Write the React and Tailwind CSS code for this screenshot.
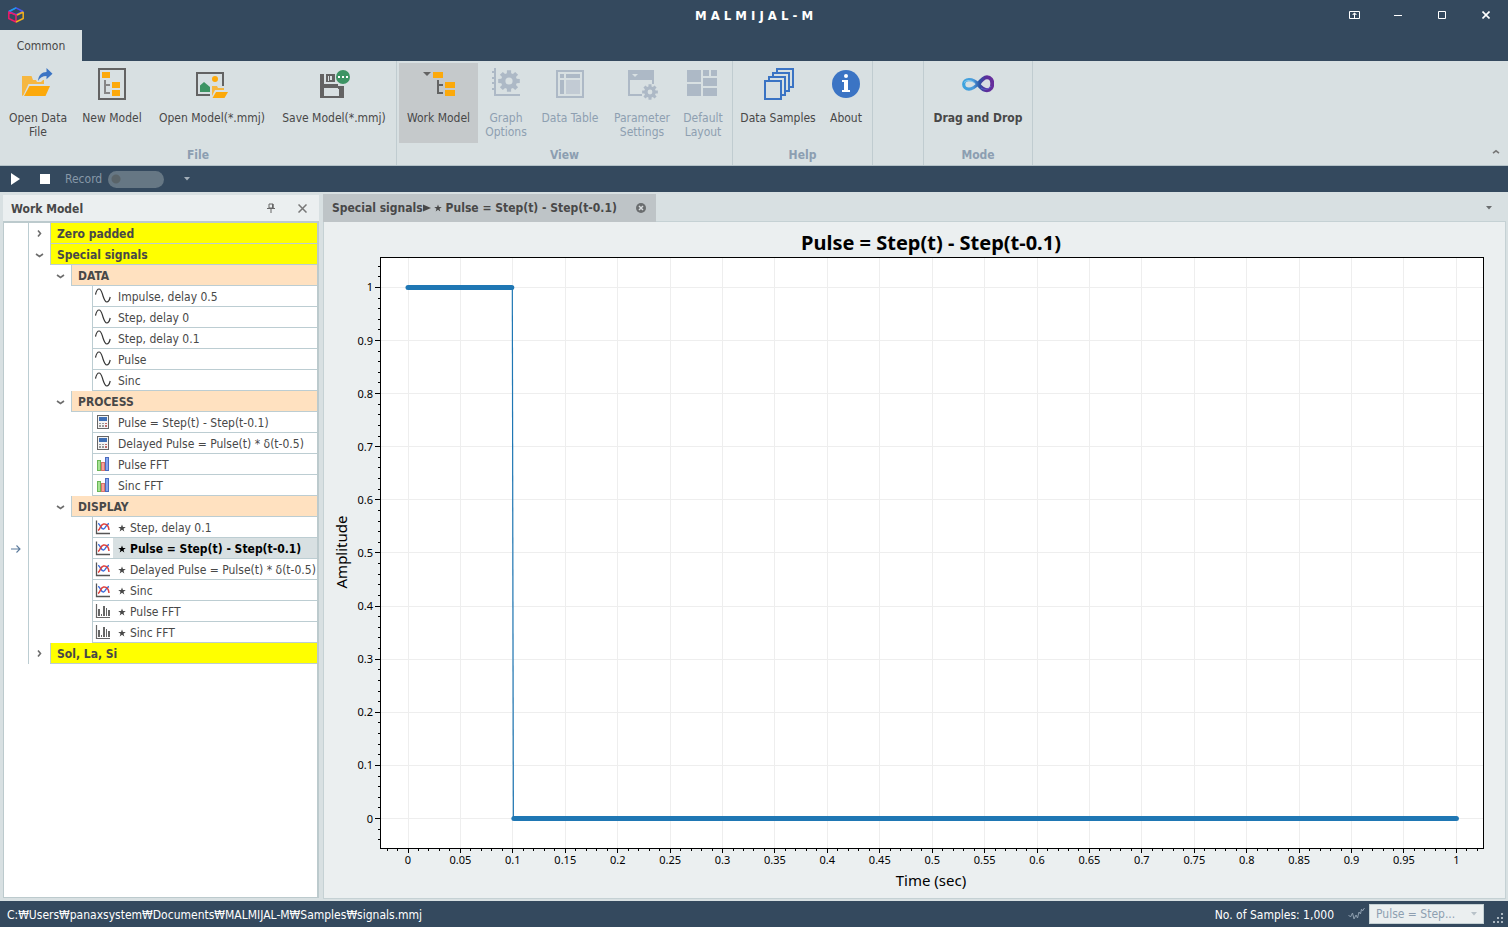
import React from "react";

const UI = "font-['DejaVu_Sans_Condensed','Noto_Sans_CJK_KR',sans-serif]";

/* ---------- ribbon icons ---------- */

function Icon({ children }) {
  return (
    <svg width="32" height="32" viewBox="0 0 32 32" aria-hidden="true" className="shrink-0">
      {children}
    </svg>
  );
}

function gearPath(cx, cy, outer, inner, hole) {
  const teeth = 8;
  let d = "";
  for (let i = 0; i < teeth; i++) {
    const a = (i / teeth) * Math.PI * 2;
    [[-0.27, inner], [-0.19, outer], [0.19, outer], [0.27, inner]].forEach(([o, r], k) => {
      d += `${i === 0 && k === 0 ? "M" : "L"}${(cx + r * Math.cos(a + o)).toFixed(2)} ${(cy + r * Math.sin(a + o)).toFixed(2)}`;
    });
  }
  return `${d}Z M${cx + hole} ${cy}A${hole} ${hole} 0 1 0 ${cx - hole} ${cy}A${hole} ${hole} 0 1 0 ${cx + hole} ${cy}Z`;
}

const OpenDataIcon = () => (
  <Icon>
    <path d="M0 8h9.500l1.500 4h3l1 2h4l2-2h1v4H6.500L1.500 27 0 28z" fill="#f6b740" />
    <path d="M7.500 18H28l-4.500 10H2z" fill="#fca90b" />
    <path d="M16 13c.5-6 4-9 8.500-9V0l6 5.700-6 5.600V8c-4 0-6.500 1.500-8.500 5z" fill="#3b74c4" />
  </Icon>
);

const NewModelIcon = () => (
  <Icon>
    <rect x="3" y="1" width="26" height="30" fill="none" stroke="#636363" strokeWidth="2" />
    <path d="M6 4h8v6H6zM16 14h8v6h-8zM16 22h8v6h-8z" fill="#fca90b" />
    <path d="M9 12v13h5M9 17h5" fill="none" stroke="#868686" strokeWidth="2" />
  </Icon>
);

const OpenModelIcon = () => (
  <Icon>
    <path d="M14 27H1V5h26v13" fill="none" stroke="#636363" strokeWidth="2" />
    <path d="M8 14l6 5v5H4v-6.500z" fill="#3d9464" />
    <circle cx="19" cy="11" r="3" fill="#fca90b" />
    <path d="M16 18h5l1 2h6v2h-9l-3 6z" fill="#f6b740" />
    <path d="M20 24h12l-3.500 6H16.500z" fill="#fca90b" />
  </Icon>
);

const SaveModelIcon = () => (
  <Icon>
    <path d="M2 6h4v10h14v2h6v12H2z" fill="#636363" />
    <path d="M8 6h9v8H8z" fill="#636363" />
    <path d="M10 8h1v5h-1zM12 8h2v4h-2z" fill="#d8e0e2" />
    <path d="M6 20h15v8H6z" fill="#d8e0e2" />
    <path d="M20 18h6v3h-6z" fill="#636363" />
    <circle cx="25" cy="9" r="7" fill="#3d9464" />
    <path d="M20 8h2v2h-2zM24 8h2v2h-2zM28 8h2v2h-2z" fill="#fff" />
  </Icon>
);

const WorkModelIcon = () => (
  <Icon>
    <path d="M0 4h8L4 8z" fill="#636363" />
    <path d="M10 4h10v6H10zM22 14h10v6H22zM22 22h10v6H22z" fill="#fca90b" />
    <path d="M15 12v13h5M15 17h5" fill="none" stroke="#636363" strokeWidth="2" />
  </Icon>
);

const GraphOptionsIcon = () => (
  <Icon>
    <path d="M5 0v27h25" fill="none" stroke="#adb9c6" strokeWidth="2" />
    <path d="M2 4h3M2 10h3M2 15h3M2 21h3" stroke="#adb9c6" strokeWidth="2" />
    <path d={gearPath(19, 13, 11, 8, 3.6)} fill="#adb9c6" fillRule="evenodd" />
  </Icon>
);

const DataTableIcon = () => (
  <Icon>
    <rect x="3" y="3" width="26" height="26" fill="none" stroke="#adb9c6" strokeWidth="2" />
    <path d="M6 6h4v4H6zM12 6h14v4H12zM6 12h4v14H6z" fill="#adb9c6" />
    <path d="M12 12h14v14H12z" fill="#c2cbd4" />
  </Icon>
);

const ParameterIcon = () => (
  <Icon>
    <path d="M2 2h26v14h-2v-4H4v14h12v2H2z" fill="#adb9c6" />
    <path d="M6 6h6l-3 3z" fill="#d8e0e2" />
    <path d={gearPath(24, 24, 8, 5.8, 2.4)} fill="#adb9c6" fillRule="evenodd" />
  </Icon>
);

const LayoutIcon = () => (
  <Icon>
    <path
      d="M0 2h14v12H0zM0 16h14v12H0zM16 2h6v6h-6zM24 2h6v6h-6zM16 10h14v8H16zM16 20h14v8H16z"
      fill="#adb9c6"
    />
  </Icon>
);

const SamplesIcon = () => (
  <Icon>
    <g fill="#d8e0e2" stroke="#3b74c4" strokeWidth="2">
      <path d="M15 1h16v18H15z" />
      <path d="M11 5h16v18H11z" />
      <path d="M7 9h16v18H7z" />
      <path d="M3 13h16v18H3z" />
    </g>
  </Icon>
);

const AboutIcon = () => (
  <Icon>
    <circle cx="16" cy="16" r="14" fill="#3b74c4" />
    <circle cx="16" cy="8" r="2" fill="#fff" />
    <path d="M12 12h6v10h2v2h-8v-2h2v-8h-2z" fill="#fff" />
  </Icon>
);

const DragDropIcon = () => (
  <Icon>
    <defs>
      <linearGradient id="loop" gradientUnits="userSpaceOnUse" x1="0" x2="32" y1="16" y2="16">
        <stop offset="0" stopColor="#3ba4de" />
        <stop offset="0.35" stopColor="#4a9bdb" />
        <stop offset="0.55" stopColor="#2f55a4" />
        <stop offset="0.75" stopColor="#5b2d9b" />
        <stop offset="1" stopColor="#6a2f9c" />
      </linearGradient>
    </defs>
    <g fill="none" stroke="url(#loop)">
      <path d="M17 17C13.500 13 10.500 11.700 7 11.700c-3.300 0-5.300 2-5.300 4.600S3.700 21.200 7 21.200c4 0 7-3 10-6.200" strokeWidth="3.200" />
      <path d="M15 18c3-4 5.500-8.800 10-8.800 3.500 0 5.300 3 5.300 6.300 0 4-2 6.700-5.300 6.700-3.500 0-6-2.200-9-6.200" strokeWidth="4" />
    </g>
    <path d="M2 14.500c3-3 7.500-2.500 11 1" fill="none" stroke="#a5dcf5" opacity="0.7" />
    <path d="M19 20c3 2 8 2 10-2" fill="none" stroke="#5f7be0" opacity="0.7" />
  </Icon>
);

/* ---------- tree icons ---------- */

const WaveIcon = () => (
  <svg width="16" height="16" viewBox="0 0 16 16" aria-hidden="true">
    <path d="M.5 6.500C1.500 2 3 1 4 1c2.500 0 3 4 4 7s2 6 3.800 6c1.400 0 2.700-2 3.400-5" fill="none" stroke="#333" strokeWidth="1.200" />
  </svg>
);

const CalcIcon = () => (
  <svg width="16" height="16" viewBox="0 0 16 16" aria-hidden="true">
    <rect x="2.500" y="1.500" width="11" height="13" fill="#f4f4f4" stroke="#666" />
    <rect x="4" y="3" width="8" height="4" fill="#3f6fb5" />
    <path d="M4 9h2v1H4zM7 9h2v1H7zM4 11h2v2H4zM7 11h2v2H7z" fill="#9a9a9a" />
    <path d="M10 9h2v1h-2zM10 11h2v2h-2z" fill="#c06a68" />
  </svg>
);

const BarsIcon = () => (
  <svg width="16" height="16" viewBox="0 0 16 16" aria-hidden="true">
    <rect x="2.500" y="4.500" width="3" height="10" fill="#a6e394" stroke="#69b557" />
    <rect x="6.500" y="6.500" width="3" height="8" fill="#f4a39a" stroke="#d8726b" />
    <rect x="10.500" y="1.500" width="3" height="13" fill="#86a6f0" stroke="#4a6bbd" />
  </svg>
);

const PlotIcon = () => (
  <svg width="16" height="16" viewBox="0 0 16 16" aria-hidden="true">
    <path d="M1.500 1.500v13H15" fill="none" stroke="#555" strokeWidth="1.300" />
    <path d="M3 4.500c2.500 0 2.500 6 5.500 5.500 2.500-.5 2-4.500 5.500-5.500" fill="none" stroke="#3f6fdc" strokeWidth="1.400" />
    <path d="M3 11.500c2.500-1 2-5.500 5.500-6.500 3.500-.5 5 2 5.500 6" fill="none" stroke="#e0423c" strokeWidth="1.500" />
  </svg>
);

const SpectrumIcon = () => (
  <svg width="16" height="16" viewBox="0 0 16 16" aria-hidden="true">
    <path d="M1.500 1v13.500H15" fill="none" stroke="#666" strokeWidth="1.200" />
    <path d="M3 6h2v7H3zM6 11h1v2H6zM8 3h2v10H8zM11 5h1v8h-1zM13 7h2v6h-2z" fill="#666" />
  </svg>
);

const TREE_ICONS = { wave: WaveIcon, calc: CalcIcon, bars: BarsIcon, plot: PlotIcon, spectrum: SpectrumIcon };

const Chevron = ({ open }) => (
  <svg width="9" height="9" viewBox="0 0 9 9" aria-hidden="true">
    <path
      d={open ? "M1 4l3.500 2.500L8 4" : "M3 1.500l2.500 3L3 7.500"}
      fill="none"
      stroke="#6d6d6d"
      strokeWidth="1.600"
    />
  </svg>
);

const DownTriangle = ({ color }) => (
  <svg width="6" height="4" viewBox="0 0 6 4" aria-hidden="true">
    <path d="M0 0h6L3 3.500z" fill={color} />
  </svg>
);

/* ---------- title bar ---------- */

function TitleBar() {
  return (
    <header className="grid h-[30px] shrink-0 grid-cols-[1fr_auto_1fr] items-center text-white">
      <svg width="16" height="16" viewBox="0 0 16 16" aria-hidden="true" className="ml-2">
        <g fill="none" strokeWidth="1.500" strokeLinejoin="round">
          <path d="M1 4.500L8 .8l7 3.700-7 3.300z" stroke="#4a55f0" />
          <path d="M1 4.500L8 .8" stroke="#1ba0ec" />
          <path d="M.8 5v6.500L8 15V8z" stroke="#ee1a6a" />
          <path d="M15.200 5v6.500L8 15M9 8l6.200-3" stroke="#f3b01c" />
        </g>
      </svg>
      <h1 className="pt-[2px] text-[13px] font-bold">M A L M I J A L - M</h1>
      <div className="flex justify-end">
        <button aria-label="Pin to top" className="flex h-[30px] w-11 items-center justify-center">
          <svg width="11" height="8" viewBox="0 0 11 8"><path d="M.5.5h10v7H.5zM5.500 2v5" fill="none" stroke="#fff" /><path d="M5.500 1.500l2.500 2.300H3z" fill="#fff" /></svg>
        </button>
        <button aria-label="Minimize" className="flex h-[30px] w-11 items-center justify-center">
          <svg width="8" height="8" viewBox="0 0 8 8"><path d="M0 4.500h8" stroke="#fff" /></svg>
        </button>
        <button aria-label="Maximize" className="flex h-[30px] w-11 items-center justify-center">
          <svg width="8" height="8" viewBox="0 0 8 8"><path d="M.5.5h7v7h-7z" fill="none" stroke="#fff" /></svg>
        </button>
        <button aria-label="Close" className="flex h-[30px] w-11 items-center justify-center">
          <svg width="8" height="8" viewBox="0 0 8 8"><path d="M.5.5l7 7M7.500.5l-7 7" stroke="#fff" strokeWidth="1.600" /></svg>
        </button>
      </div>
    </header>
  );
}

/* ---------- ribbon ---------- */

function RibbonButton({ icon, label, width, active, disabled, bold }) {
  return (
    <button
      disabled={disabled}
      className={`flex h-20 shrink-0 flex-col items-center gap-[11px] pt-[5px] leading-[14px] ${width} ${active ? "bg-[#c5c9cb]" : ""} ${disabled ? "text-[#8e9fb1]" : "text-[#484848]"} ${bold ? "font-bold" : ""}`}
    >
      {icon}
      <span className="whitespace-pre text-center">{label}</span>
    </button>
  );
}

function RibbonGroup({ title, children, width }) {
  return (
    <section className={`flex flex-col border-r border-[#c0ccd0] px-[2px] pt-[2px] ${width || ""}`}>
      <div className="flex h-20">{children}</div>
      {title && <h2 className="mt-[5px] text-center leading-[14px] font-bold text-[#8c9eb1]">{title}</h2>}
    </section>
  );
}

function Ribbon() {
  return (
    <div className="flex h-[105px] shrink-0 border-b border-[#b4c2c8] bg-[#d8e0e2]">
      <RibbonGroup title="File">
        <RibbonButton width="w-[72px]" icon={<OpenDataIcon />} label={"Open Data\nFile"} />
        <RibbonButton width="w-[76px]" icon={<NewModelIcon />} label="New Model" />
        <RibbonButton width="w-[124px]" icon={<OpenModelIcon />} label="Open Model(*.mmj)" />
        <RibbonButton width="w-[120px]" icon={<SaveModelIcon />} label="Save Model(*.mmj)" />
      </RibbonGroup>
      <RibbonGroup title="View" width="w-[336px]">
        <RibbonButton width="w-[79px]" icon={<WorkModelIcon />} label="Work Model" active />
        <RibbonButton width="w-[56px]" icon={<GraphOptionsIcon />} label={"Graph\nOptions"} disabled />
        <RibbonButton width="w-[72px]" icon={<DataTableIcon />} label="Data Table" disabled />
        <RibbonButton width="w-[72px]" icon={<ParameterIcon />} label={"Parameter\nSettings"} disabled />
        <RibbonButton width="w-[50px]" icon={<LayoutIcon />} label={"Default\nLayout"} disabled />
      </RibbonGroup>
      <RibbonGroup title="Help" width="w-[140px]">
        <RibbonButton width="w-[86px]" icon={<SamplesIcon />} label="Data Samples" />
        <RibbonButton width="w-[50px]" icon={<AboutIcon />} label="About" />
      </RibbonGroup>
      <RibbonGroup width="w-[51px]" />
      <RibbonGroup title="Mode" width="w-[109px]">
        <RibbonButton width="w-[104px]" icon={<DragDropIcon />} label="Drag and Drop" bold />
      </RibbonGroup>
      <button aria-label="Collapse ribbon" className="mt-auto mr-2 mb-[11px] ml-auto">
        <svg width="8" height="5" viewBox="0 0 8 5"><path d="M1 4.200L4 1.800l3 2.400" fill="none" stroke="#777" strokeWidth="1.600" /></svg>
      </button>
    </div>
  );
}

function RunBar() {
  return (
    <div className="flex h-[26px] shrink-0 items-center text-[#8798a8]">
      <button aria-label="Run" className="ml-[11px]">
        <svg width="9" height="12" viewBox="0 0 9 12"><path d="M0 0l9 6-9 6z" fill="#fff" /></svg>
      </button>
      <button aria-label="Stop" className="ml-5 size-[10px] bg-white" />
      <label htmlFor="record" className="ml-[15px] w-[43px]">Record</label>
      <input
        id="record"
        type="checkbox"
        role="switch"
        disabled
        className="h-[17px] w-14 appearance-none rounded-full bg-[#667784] bg-[radial-gradient(circle_at_8px_8px,#5a6469_4px,transparent_5px)]"
      />
      <button aria-label="More commands" className="ml-5">
        <DownTriangle color="#a3afb9" />
      </button>
    </div>
  );
}

/* ---------- work model panel ---------- */

const ROWS = [
  { level: 0, text: "Zero padded", open: false },
  { level: 0, text: "Special signals", open: true },
  { level: 1, text: "DATA", open: true },
  { level: 2, icon: "wave", text: "Impulse, delay 0.5" },
  { level: 2, icon: "wave", text: "Step, delay 0" },
  { level: 2, icon: "wave", text: "Step, delay 0.1" },
  { level: 2, icon: "wave", text: "Pulse" },
  { level: 2, icon: "wave", text: "Sinc" },
  { level: 1, text: "PROCESS", open: true },
  { level: 2, icon: "calc", text: "Pulse = Step(t) - Step(t-0.1)" },
  { level: 2, icon: "calc", text: "Delayed Pulse = Pulse(t) * δ(t-0.5)" },
  { level: 2, icon: "bars", text: "Pulse FFT" },
  { level: 2, icon: "bars", text: "Sinc FFT" },
  { level: 1, text: "DISPLAY", open: true },
  { level: 2, icon: "plot", star: true, text: "Step, delay 0.1" },
  { level: 2, icon: "plot", star: true, text: "Pulse = Step(t) - Step(t-0.1)", selected: true },
  { level: 2, icon: "plot", star: true, text: "Delayed Pulse = Pulse(t) * δ(t-0.5)" },
  { level: 2, icon: "plot", star: true, text: "Sinc" },
  { level: 2, icon: "spectrum", star: true, text: "Pulse FFT" },
  { level: 2, icon: "spectrum", star: true, text: "Sinc FFT" },
  { level: 0, text: "Sol, La, Si", open: false },
];

const Star = () => (
  <svg width="8" height="8" viewBox="0 0 10 10" aria-hidden="true" className="mr-1 shrink-0">
    <path d="M5 .5l1.200 3.200 3.500.1-2.800 2.100 1 3.400L5 7.300 2.100 9.300l1-3.400L.3 3.800l3.500-.1z" fill="currentColor" />
  </svg>
);

function TreeRow({ row }) {
  const TreeIcon = TREE_ICONS[row.icon];
  const indent = ["w-0", "w-[21px]", "w-[63px]"][row.level];
  const box = ["bg-[#ffff00] pl-1.5 font-bold", "bg-[#ffe1c0] pl-1.5 font-bold", ""][row.level];
  return (
    <li
      role="treeitem"
      aria-level={row.level + 1}
      aria-expanded={row.open}
      aria-selected={!!row.selected}
      className="flex h-[21px]"
    >
      <span className="flex w-[25px] shrink-0 items-center justify-center border-r border-[#bccdd2]">
        {row.selected && (
          <svg width="10" height="8" viewBox="0 0 10 8" aria-hidden="true">
            <path d="M0 4h9M5.500.5L9 4 5.500 7.500" fill="none" stroke="#5b7a9c" strokeWidth="1.100" />
          </svg>
        )}
      </span>
      <span className={`shrink-0 ${indent}`} />
      {row.level < 2 && (
        <button aria-label={`Toggle ${row.text}`} className="flex w-[21px] shrink-0 items-center justify-center">
          <Chevron open={row.open} />
        </button>
      )}
      <span className={`flex min-w-0 flex-1 items-center border-b border-l border-[#bccdd2] ${box}`}>
        {TreeIcon && (
          <span className="flex w-5 shrink-0 justify-center">
            <TreeIcon />
          </span>
        )}
        <span
          className={`flex h-full min-w-0 flex-1 items-center overflow-hidden pt-[2px] whitespace-nowrap ${row.level === 2 ? "pl-[5px]" : ""} ${row.selected ? "bg-[#d8e0e2] font-bold text-black" : ""}`}
        >
          {row.star && <Star />}
          {row.text}
        </span>
      </span>
    </li>
  );
}

function WorkModelPanel() {
  return (
    <aside className="flex w-[316px] shrink-0 flex-col pt-[1px] pb-[1px]">
      <div className="flex h-[26px] shrink-0 items-center bg-[#ebeff0] pr-2.5 pl-2">
        <h2 className="flex-1 pt-[2px] font-bold">Work Model</h2>
        <button aria-label="Auto hide" className="mr-[23px]">
          <svg width="8" height="10" viewBox="0 0 8 10"><path d="M2 1h4v4H2z" fill="none" stroke="#666" /><path d="M5 1h1.500v4H5z" fill="#666" /><path d="M0 5.500h8M4 6v4" stroke="#666" /></svg>
        </button>
        <button aria-label="Close panel" className="mr-0.5">
          <svg width="9" height="9" viewBox="0 0 9 9"><path d="M.5.5l8 8M8.500.5l-8 8" stroke="#777" strokeWidth="1.500" /></svg>
        </button>
      </div>
      <ul role="tree" className="min-h-0 flex-1 overflow-hidden border border-t-2 border-r-2 border-[#bccacd] bg-white">
        {ROWS.map((row, i) => (
          <TreeRow key={i} row={row} />
        ))}
      </ul>
    </aside>
  );
}

/* ---------- chart ---------- */

const PLOT = { left: 56, top: 35, right: 1159, bottom: 626 };
const px = (v) => 84 + v * 1048.4;
const py = (v) => 596.5 - v * 531.1;
const crisp = (v) => Math.floor(v) + 0.5;

function Chart() {
  const xs = Array.from({ length: 21 }, (_, i) => i / 20);
  const ys = Array.from({ length: 11 }, (_, i) => i / 10);
  const minorX = Array.from({ length: 105 }, (_, i) => (i - 2) / 100);
  const minorY = Array.from({ length: 55 }, (_, i) => (i - 2) / 50).filter((v) => v <= 1.045);
  return (
    <svg
      viewBox="0 0 1181 676"
      role="img"
      aria-label="Pulse = Step(t) - Step(t-0.1)"
      className="h-full w-full font-['Noto_Sans',sans-serif]"
    >
      <text x="607" y="28" textAnchor="middle" fontSize="20" fontWeight="700">Pulse = Step(t) - Step(t-0.1)</text>
      <rect x={PLOT.left} y={PLOT.top} width={PLOT.right - PLOT.left} height={PLOT.bottom - PLOT.top} fill="#fff" />
      <g stroke="#eeeeee">
        {xs.map((v) => <path key={v} d={`M${crisp(px(v))} ${PLOT.top}V${PLOT.bottom}`} />)}
        {ys.map((v) => <path key={v} d={`M${PLOT.left} ${crisp(py(v))}H${PLOT.right}`} />)}
      </g>
      <rect x={PLOT.left + 0.5} y={PLOT.top + 0.5} width={PLOT.right - PLOT.left} height={PLOT.bottom - PLOT.top} fill="none" stroke="#000" />
      <g stroke="#000">
        {xs.map((v) => <path key={v} d={`M${crisp(px(v))} ${PLOT.bottom}v5`} />)}
        {ys.map((v) => <path key={v} d={`M${PLOT.left} ${crisp(py(v))}h-5`} />)}
        {minorX.map((v) => <path key={v} d={`M${crisp(px(v))} ${PLOT.bottom}v3`} />)}
        {minorY.map((v) => <path key={v} d={`M${PLOT.left} ${crisp(py(v))}h-2`} />)}
      </g>
      <path d={`M${px(0.0995)} ${py(1)}L${px(0.1005)} ${py(0)}`} stroke="#1f77b4" strokeWidth="1.200" />
      <g stroke="#1f77b4" strokeWidth="5" strokeLinecap="round">
        <path d={`M${px(0)} ${py(1)}H${px(0.099)}`} />
        <path d={`M${px(0.101)} ${py(0)}H${px(1)}`} />
      </g>
      <g fontSize="11">
        {xs.map((v) => <text key={v} x={px(v)} y="642" textAnchor="middle">{v}</text>)}
        {ys.map((v) => <text key={v} x="49" y={py(v) + 4} textAnchor="end">{v}</text>)}
      </g>
      <text x="607" y="664" textAnchor="middle" fontSize="15">Time (sec)</text>
      <text transform="translate(23 330) rotate(-90)" textAnchor="middle" fontSize="15">Amplitude</text>
    </svg>
  );
}

function DocumentArea() {
  return (
    <main className="flex min-w-0 flex-1 flex-col">
      <div className="flex h-7 shrink-0">
        <div className="flex items-center bg-[#bec4c7] pr-2.5 pl-[9px] font-bold">
          <span>Special signals</span>
          <svg width="8" height="8" viewBox="0 0 8 8" aria-hidden="true" className="mr-[3px]"><path d="M0 .5L8 4 0 7.500z" fill="currentColor" /></svg>
          <Star />
          <span>Pulse = Step(t) - Step(t-0.1)</span>
          <button aria-label="Close tab" className="ml-[19px]">
            <svg width="10" height="10" viewBox="0 0 10 10"><circle cx="5" cy="5" r="5" fill="#6a6d6f" /><path d="M3 3l4 4M7 3L3 7" stroke="#d8dcde" strokeWidth="1.500" /></svg>
          </button>
        </div>
        <div className="flex flex-1 items-center justify-end border-b border-[#c5d1d4] pr-[14px]">
          <button aria-label="Document list"><DownTriangle color="#6a6d6f" /></button>
        </div>
      </div>
      <div className="min-h-0 flex-1 border border-t-0 border-[#c5d1d4] bg-[#ebeff0]">
        <Chart />
      </div>
    </main>
  );
}

function StatusBar() {
  return (
    <footer className="flex h-[26px] shrink-0 items-center pl-[7px] text-white">
      <span className="flex-1 pt-[2px]">C:₩Users₩panaxsystem₩Documents₩MALMIJAL-M₩Samples₩signals.mmj</span>
      <label htmlFor="signal" className="mr-[14px] pt-[2px]">No. of Samples: 1,000</label>
      <svg width="17" height="14" viewBox="0 0 17 14" aria-hidden="true" className="mr-1">
        <path d="M.5 8l2 2 2-4 1.500 6 2-4 1.500 3 1.500-6 1.500 2 1-5 1 2 2-3" fill="none" stroke="#8fa0b0" />
      </svg>
      <span className="grid h-5 w-[115px] items-center border border-[#c5d1d4] bg-[#ebeff0]">
        <select id="signal" disabled className="col-start-1 row-start-1 h-full w-full appearance-none pl-1.5 text-[#8e9fb1] opacity-100">
          <option>Pulse = Step...</option>
        </select>
        <span className="col-start-1 row-start-1 mr-1.5 justify-self-end"><DownTriangle color="#b8c2c9" /></span>
      </span>
      <svg width="10" height="10" viewBox="0 0 10 10" aria-hidden="true" className="mt-2 mr-[5px] ml-[9px]">
        <path d="M8 0h2v2H8zM4 4h2v2H4zM8 4h2v2H8zM0 8h2v2H0zM4 8h2v2H4zM8 8h2v2H8z" fill="#a9b5bf" />
      </svg>
    </footer>
  );
}

export default function App() {
  return (
    <div className={`flex h-screen flex-col overflow-hidden bg-[#34495e] text-[12px] text-[#484848] ${UI}`}>
      <TitleBar />
      <nav className="flex h-[31px] shrink-0">
        <button className="w-[82px] bg-[#d8e0e2]">Common</button>
      </nav>
      <Ribbon />
      <RunBar />
      <div className="flex min-h-0 flex-1 gap-1 bg-[#d8e0e2] pt-[2px] pr-[2px] pb-[2px] pl-[3px]">
        <WorkModelPanel />
        <DocumentArea />
      </div>
      <StatusBar />
    </div>
  );
}
